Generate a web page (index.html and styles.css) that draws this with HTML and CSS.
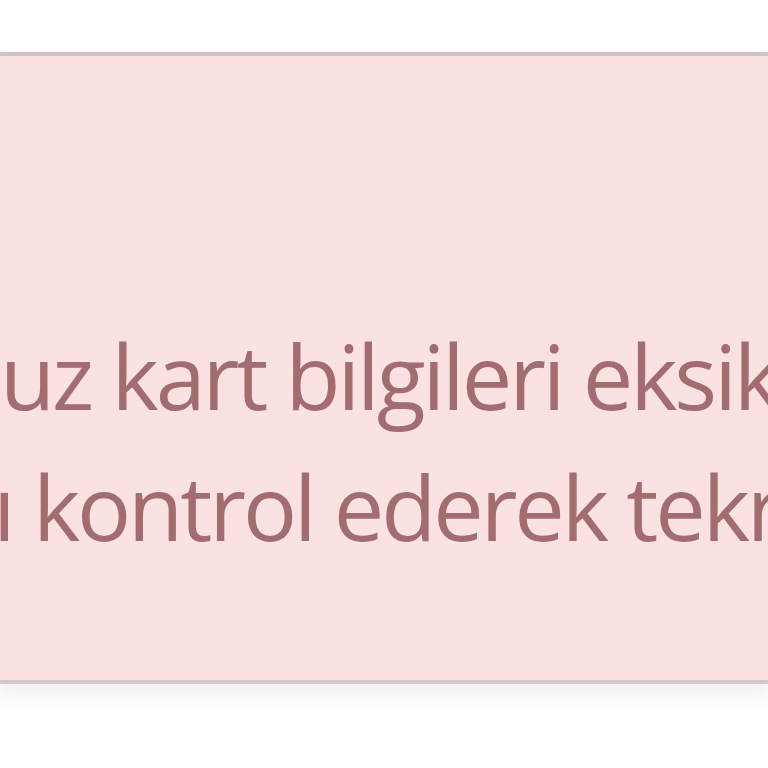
FILE: index.html
```html
<!DOCTYPE html>
<html lang="tr">
<head>
<meta charset="utf-8">
<link rel="stylesheet" href="styles.css">
</head>
<body>
<div class="alert">
  <div class="msg">
    <div class="line line1"><span class="pre">Girmiş olduğun</span>uz kart bilgileri eksik veya hatalı.</div>
    <div class="line line2"><span class="pre">Lütfen kartınız</span>ı kontrol ederek tekrar deneyiniz.</div>
  </div>
</div>
</body>
</html>
```
FILE: styles.css
```css
html, body {
  margin: 0;
  padding: 0;
  background: #ffffff;
  width: 768px;
  height: 768px;
  overflow: hidden;
}
.alert {
  margin-top: 52px;
  height: 624px;
  background: #fae2e3;
  border-top: 4px solid #d2c1c5;
  border-bottom: 4px solid #d6c6c8;
  box-shadow: 0 10px 16px rgba(120, 90, 95, 0.10);
  overflow: hidden;
  display: flex;
  flex-direction: column;
  justify-content: flex-start;
}
.msg {
  padding-top: 254px;
  font-family: "Open Sans", "Liberation Sans", sans-serif;
  font-size: 90px;
  line-height: 131px;
  letter-spacing: -3.1px;
  color: #a26c70;
}
.line {
  white-space: nowrap;
}
.line2 {
  margin-left: -7px;
}
.pre {
  display: inline-block;
  width: 0;
  direction: rtl;
  text-align: right;
  white-space: nowrap;
}
```
